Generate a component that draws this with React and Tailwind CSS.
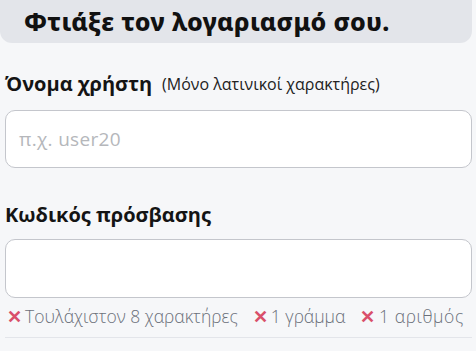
export default function App() {
  return (
    <div className="w-[476px] h-[351px] overflow-hidden bg-[#f6f7f9]" style={{ fontFamily: '"Open Sans", "Noto Sans", sans-serif' }}>
      <div className="h-[43px] w-[472px] bg-[#e3e5ea] rounded-b-xl flex items-center pl-[24px]">
        <h1 className="text-[25px] font-extrabold text-[#111] leading-none tracking-[0.3px]" style={{ fontFamily: '"Noto Sans", sans-serif' }}>Φτιάξε τον λογαριασμό σου.</h1>
      </div>
      <div className="px-[5px] pr-[4px]">
        <div className="mt-[28px] h-[26px] flex items-center gap-[10px]">
          <span className="text-[20px] font-bold text-[#141414]">Όνομα χρήστη</span>
          <span className="text-[16px] text-[#222]">(Μόνο λατινικοί χαρακτήρες)</span>
        </div>
        <div className="mt-[13px] h-[58px] rounded-[10px] border border-[#c4c6cc] bg-white flex items-center px-[13px]">
          <span className="text-[19px] text-[#b5b7bb] tracking-[0.3px]">π.χ. user20</span>
        </div>
        <div className="mt-[34px] h-[26px] flex items-center text-[20px] font-bold text-[#141414]">Κωδικός πρόσβασης</div>
        <div className="mt-[11px] h-[59px] rounded-[10px] border border-[#c4c6cc] bg-white"></div>
        <div className="mt-[6px] h-[24px] flex items-center gap-[15px] text-[17.5px] text-[#6b7079] pl-[2px] whitespace-nowrap font-light">
          <span><span className="text-[#d9506a] font-bold mr-[3px]">✕</span>Τουλάχιστον 8 χαρακτήρες</span>
          <span><span className="text-[#d9506a] font-bold mr-[3px]">✕</span>1 γράμμα</span>
          <span className="tracking-[0.6px]"><span className="text-[#d9506a] font-bold mr-[3px]">✕</span>1 αριθμός</span>
        </div>
        <div className="mt-[9px] h-px bg-[#e3e5ea]"></div>
      </div>
    </div>
  );
}
